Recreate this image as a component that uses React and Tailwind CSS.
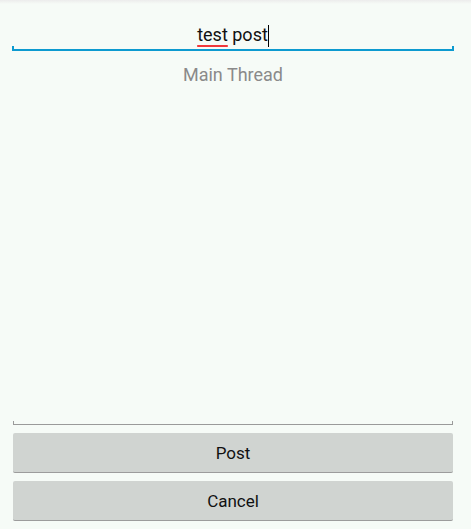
export default function App() {
  return (
    <div className="w-[471px] h-[529px] bg-[#f6fbf7] flex flex-col font-['Roboto',sans-serif] overflow-hidden">
      {/* top shadow */}
      <div className="h-[4px] bg-gradient-to-b from-[#ececec] to-[#f6fbf7]" />

      <div className="flex flex-col pl-[12px] pr-[17px] pt-[14px]">
        {/* title field */}
        <div className="relative h-[33px] flex items-end justify-center pb-[5px]">
          <span className="text-[18px] leading-[22px] text-[#111]">
            <span className="underline decoration-[#f0383b] decoration-2 underline-offset-[4px]">test</span> post
          </span>
          <span className="w-[1px] h-[22px] bg-black mb-[-1px]" />
          <div className="absolute left-0 right-0 bottom-0 h-[5px] border-x-2 border-b-2 border-[#0d9ad0]" />
        </div>

        {/* body field */}
        <div className="relative h-[374px] flex justify-center pt-[13px] mx-[1px]">
          <span className="text-[18px] leading-[22px] text-[#8a8a8a]">Main Thread</span>
          <div className="absolute left-0 right-0 bottom-0 h-[4px] border-x border-b border-[#9a9a9a]" />
        </div>

        <div className="flex flex-col gap-[8px] mt-[8px] mx-[1px]">
          <button className="h-[40px] bg-[#d0d4d1] border-b border-[#9c9c9c] rounded-[2px] pt-[2px] text-[17px] text-[#111]">
            Post
          </button>
          <button className="h-[40px] bg-[#d0d4d1] border-b border-[#9c9c9c] rounded-[2px] pt-[2px] text-[17px] text-[#111]">
            Cancel
          </button>
        </div>
      </div>
    </div>
  );
}
